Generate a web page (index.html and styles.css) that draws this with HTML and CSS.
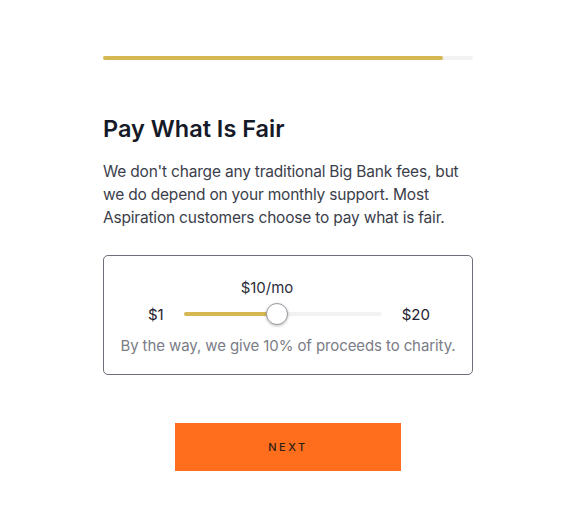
FILE: index.html
```html
<!DOCTYPE html>
<html lang="en">

<head>
    <meta charset="UTF-8">
    <meta name="viewport" content="width=device-width, initial-scale=1.0">
    <title>Pay What Is Fair</title>
    <link rel="stylesheet" href="styles.css">
</head>

<body>
    <div class="page">
        <div class="progress">
            <div class="progress-fill"></div>
        </div>

        <h1>Pay What Is Fair</h1>
        <p class="intro">We don't charge any traditional Big Bank fees, but we do depend on your monthly support. Most Aspiration customers choose to pay what is fair.</p>

        <div class="fee-box">
            <div class="fee-value">$10/mo</div>
            <div class="slider-row">
                <span class="limit">$1</span>
                <div class="track">
                    <div class="track-fill"></div>
                    <div class="thumb"></div>
                </div>
                <span class="limit">$20</span>
            </div>
            <p class="note">By the way, we give 10% of proceeds to charity.</p>
        </div>

        <div class="actions">
            <button type="button">Next</button>
        </div>
    </div>
</body>

</html>
```

FILE: styles.css
```css
* {
    margin: 0;
    padding: 0;
    box-sizing: border-box;
    font-family: 'Inter', 'Liberation Sans', sans-serif;
}

body {
    background-color: #fff;
    color: #1b1e2b;
}

.page {
    width: 370px;
    margin-left: 103px;
    padding-top: 56px;
}

.progress {
    height: 4px;
    background-color: #f2f2f2;
    border-radius: 2px;
}

.progress-fill {
    width: 340px;
    height: 100%;
    background-color: #d6b853;
    border-radius: 2px;
}

h1 {
    margin-top: 54px;
    font-size: 23.5px;
    font-weight: 600;
    line-height: 30px;
    color: #161a28;
}

.intro {
    margin-top: 16px;
    font-size: 15.5px;
    line-height: 23px;
    letter-spacing: -0.2px;
    color: #3b3e4a;
}

.fee-box {
    margin-top: 26px;
    height: 120px;
    border: 1px solid #6e6e78;
    border-radius: 5px;
    padding-top: 22px;
    text-align: center;
}

.fee-value {
    font-size: 15px;
    line-height: 20px;
    color: #2b2e3a;
    margin-left: -42px;
}

.slider-row {
    display: flex;
    align-items: center;
    margin-top: 5px;
    padding-left: 44px;
    height: 22px;
}

.limit {
    font-size: 15px;
    color: #1e2130;
}

.track {
    position: relative;
    width: 198px;
    height: 4px;
    margin: 0 20px;
    background-color: #f2f2f2;
    border-radius: 2px;
}

.track-fill {
    width: 93px;
    height: 100%;
    background-color: #d6b853;
    border-radius: 2px;
}

.thumb {
    position: absolute;
    left: 82px;
    top: -9px;
    width: 22px;
    height: 22px;
    border-radius: 50%;
    background-color: #fff;
    border: 1px solid #9a9aa2;
    box-shadow: 0 1px 3px rgba(0, 0, 0, 0.25);
}

.note {
    margin-top: 11px;
    font-size: 15px;
    line-height: 20px;
    letter-spacing: -0.1px;
    color: #7a7c86;
}

.actions {
    display: flex;
    justify-content: center;
    margin-top: 48px;
}

button {
    width: 226px;
    height: 48px;
    background-color: #ff6e1c;
    border: none;
    font-size: 11px;
    font-weight: 500;
    letter-spacing: 2.5px;
    text-transform: uppercase;
    color: #2e2218;
    cursor: pointer;
}
```
